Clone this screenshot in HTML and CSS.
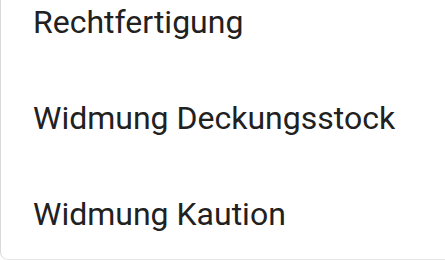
FILE: index.html
```html
<!DOCTYPE html>
<html lang="de">
<head>
<meta charset="utf-8">
<link rel="stylesheet" href="styles.css">
</head>
<body>
<div class="menu">
  <div class="item">Rechtfertigung</div>
  <div class="item">Widmung Deckungsstock</div>
  <div class="item">Widmung Kaution</div>
</div>
</body>
</html>
```
FILE: styles.css
```css
html, body {
  margin: 0;
  padding: 0;
  background: #fff;
  overflow: hidden;
}
body {
  width: 445px;
  height: 260px;
}
.menu {
  width: 445px;
  margin-top: -26px;
  border-left: 1px solid #d9d9d9;
  border-bottom: 1px solid #e6e6e6;
  border-bottom-left-radius: 8px;
  box-sizing: border-box;
  height: 286px;
  font-family: Roboto, "Noto Sans", sans-serif;
  font-size: 32px;
  color: #212121;
}
.item {
  height: 96px;
  display: flex;
  align-items: center;
  padding-left: 32px;
}
```
